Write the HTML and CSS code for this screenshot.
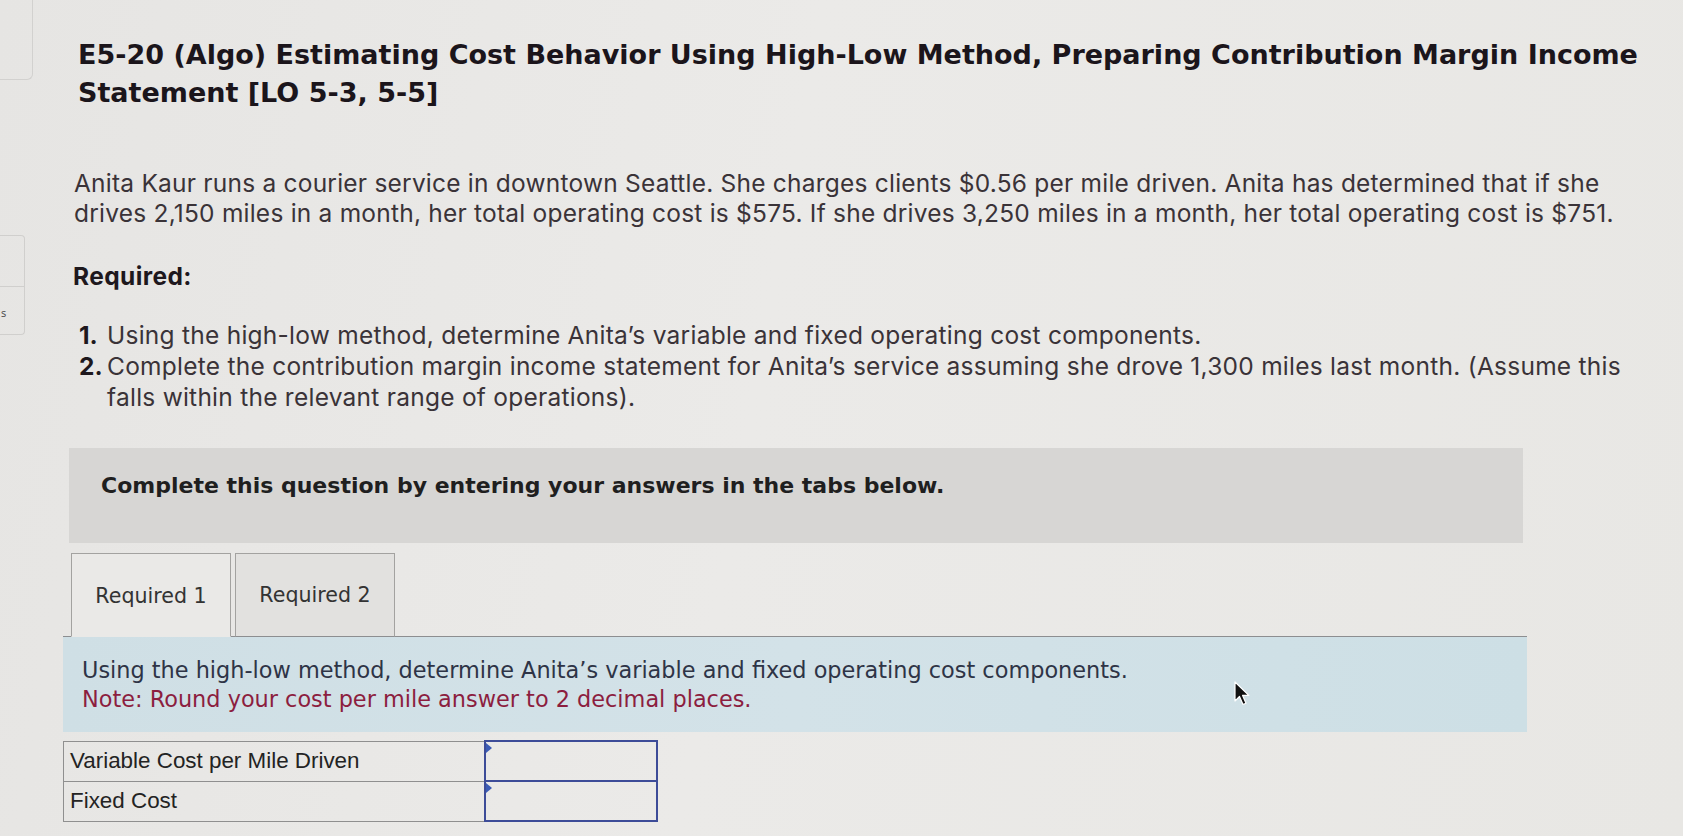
FILE: index.html
```html
<!DOCTYPE html>
<html lang="en">
<head>
<meta charset="utf-8">
<title>E5-20 (Algo) Estimating Cost Behavior</title>
<link rel="stylesheet" href="styles.css">
</head>
<body>
<div class="page">
  <aside class="rail">
    <div class="rail-top"></div>
    <div class="rail-group">
      <div class="rail-btn"></div>
      <div class="rail-btn"><span class="rail-glyph">s</span></div>
    </div>
  </aside>
  <main class="content">
    <h1 class="title">E5-20 (Algo) Estimating Cost Behavior Using High-Low Method, Preparing Contribution Margin Income Statement [LO 5-3, 5-5]</h1>
    <p class="intro">Anita Kaur runs a courier service in downtown Seattle. She charges clients $0.56 per mile driven. Anita has determined that if she drives 2,150 miles in a month, her total operating cost is $575. If she drives 3,250 miles in a month, her total operating cost is $751.</p>
    <h2 class="req">Required:</h2>
    <ol class="tasks">
      <li><span class="num">1.</span><span>Using the high-low method, determine Anita’s variable and fixed operating cost components.</span></li>
      <li><span class="num">2.</span><span>Complete the contribution margin income statement for Anita’s service assuming she drove 1,300 miles last month. (Assume this falls within the relevant range of operations).</span></li>
    </ol>
    <div class="notice">Complete this question by entering your answers in the tabs below.</div>
    <div class="tabs">
      <div class="tab active">Required 1</div>
      <div class="tab">Required 2</div>
    </div>
    <div class="panel">
      <p class="panel-text">Using the high-low method, determine Anita’s variable and fixed operating cost components.</p>
      <p class="panel-note">Note: Round your cost per mile answer to 2 decimal places.</p>
    </div>
    <table class="answers">
      <tr>
        <td class="label">Variable Cost per Mile Driven</td>
        <td class="input"><span class="marker"></span></td>
      </tr>
      <tr>
        <td class="label">Fixed Cost</td>
        <td class="input"><span class="marker"></span></td>
      </tr>
    </table>
  </main>
  <svg class="cursor" width="18" height="26" viewBox="0 0 18 26" aria-hidden="true">
    <path d="M1 1 L1 20 L5.5 15.5 L9 23.5 L12 22.2 L8.6 14.4 L14.8 14.4 Z" fill="#111" stroke="#fff" stroke-width="1.2" stroke-linejoin="round"/>
  </svg>
</div>
</body>
</html>
```
FILE: styles.css
```css
* { box-sizing: border-box; }
html, body {
  margin: 0;
  padding: 0;
  background: #e9e8e6;
}
.page {
  position: relative;
  display: flex;
  width: 1683px;
  height: 836px;
  overflow: hidden;
  background: linear-gradient(100deg, #e6e5e3 0%, #ebeae8 45%, #e8e7e4 100%);
}
.rail {
  width: 34px;
  flex: none;
  display: flex;
  flex-direction: column;
}
.rail-top {
  width: 33px;
  height: 80px;
  border: 1px solid #d2d1cf;
  border-left: none;
  border-top: none;
  border-bottom-right-radius: 6px;
}
.rail-group {
  margin-top: 155px;
  width: 25px;
  display: flex;
  flex-direction: column;
}
.rail-btn {
  height: 50px;
  border: 1px solid #d0cfcd;
  border-left: none;
  position: relative;
}
.rail-btn:first-child { border-top-right-radius: 4px; height: 52px; }
.rail-btn:last-child { border-top: none; border-bottom-right-radius: 4px; height: 48px; }
.rail-glyph {
  position: absolute;
  left: 1px;
  top: 20px;
  font: 11px/12px "Open Sans", sans-serif;
  color: #444;
}
.content {
  margin-left: 29px;
  width: 1620px;
  display: flex;
  flex-direction: column;
  align-items: flex-start;
}
.title {
  margin: 36px 0 0 15px;
  font: 700 27px/38px "DejaVu Sans", Verdana, sans-serif;
  color: #1b151b;
  width: 1600px;
}
.intro {
  margin: 56px 0 0 11px;
  font: 400 24.5px/30px Inter, "Open Sans", sans-serif;
  letter-spacing: 0.22px;
  color: #3a3338;
  width: 1548px;
}
.req {
  margin: 33px 0 0 10px;
  font: 700 24.5px/30px Inter, "Open Sans", sans-serif;
  letter-spacing: 0.4px;
  color: #1e181d;
}
.tasks {
  list-style: none;
  margin: 29px 0 0 16px;
  padding: 0;
  font: 400 24.5px/31px Inter, "Open Sans", sans-serif;
  letter-spacing: 0.25px;
  color: #3a3338;
  width: 1590px;
}
.tasks li {
  display: flex;
}
.num {
  flex: none;
  width: 28px;
  font-weight: 700;
  letter-spacing: 0;
  color: #1e181d;
}
.notice {
  margin: 35px 0 0 6px;
  width: 1454px;
  height: 95px;
  padding: 26px 0 0 32px;
  background: #d7d6d4;
  font: 700 22px/24px "DejaVu Sans", Verdana, sans-serif;
  color: #1f1f1f;
}
.tabs {
  margin: 10px 0 0 8px;
  display: flex;
  gap: 4px;
  position: relative;
  z-index: 1;
}
.tab {
  width: 160px;
  height: 84px;
  display: flex;
  align-items: center;
  justify-content: center;
  border: 1px solid #a3a2a0;
  border-bottom: 1px solid #8d8e90;
  background: #e2e1df;
  font: 400 20.6px/24px "DejaVu Sans", Verdana, sans-serif;
  color: #333;
}
.tab.active {
  background: #eae9e7;
  border-bottom-color: #eae9e7;
  padding-top: 2px;
}
.panel {
  margin-top: -1px;
  width: 1464px;
  height: 96px;
  padding: 19px 0 0 19px;
  background: linear-gradient(90deg, #cfdfe5 0%, #d3e2e8 50%, #cddfe5 100%);
  border-top: 1px solid #8d8e90;
  font: 400 22.4px/29px "DejaVu Sans", Verdana, sans-serif;
}
.panel p { margin: 0; }
.panel-text { color: #2e3446; }
.panel-note { color: #8c1e3f; }
.answers {
  margin-top: 8px;
  border-collapse: collapse;
  font: 400 22.4px/24px "Liberation Sans", Arial, sans-serif;
  color: #232323;
}
.answers td {
  height: 40px;
  padding: 0;
}
.answers .label {
  width: 421px;
  padding-left: 6px;
  border: 1.5px solid #8f8f8f;
}
.answers .input {
  width: 172px;
  border: 2px solid #3d4c98;
  position: relative;
  vertical-align: top;
}
.marker {
  position: absolute;
  left: 0;
  top: 1px;
  width: 0;
  height: 0;
  border-top: 5px solid transparent;
  border-bottom: 5px solid transparent;
  border-left: 6px solid #3c5cb5;
}
.cursor {
  position: absolute;
  left: 1234px;
  top: 681px;
}
```
